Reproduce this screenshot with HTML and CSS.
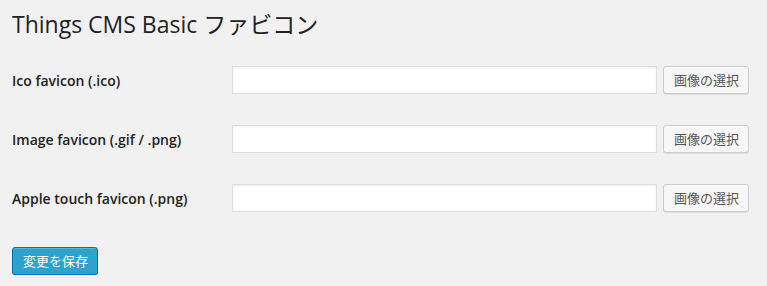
FILE: index.html
```html
<!DOCTYPE html>
<html lang="ja">
<head>
<meta charset="utf-8">
<title>Things CMS Basic ファビコン</title>
<link rel="stylesheet" href="styles.css">
</head>
<body>
<div class="wrap">
  <h2 class="title">Things CMS Basic ファビコン</h2>
  <form class="form">
    <div class="row">
      <label class="label">Ico favicon (.ico)</label>
      <div class="field">
        <input class="text" type="text">
        <button type="button" class="btn">画像の選択</button>
      </div>
    </div>
    <div class="row">
      <label class="label">Image favicon (.gif / .png)</label>
      <div class="field">
        <input class="text" type="text">
        <button type="button" class="btn">画像の選択</button>
      </div>
    </div>
    <div class="row">
      <label class="label">Apple touch favicon (.png)</label>
      <div class="field">
        <input class="text" type="text">
        <button type="button" class="btn">画像の選択</button>
      </div>
    </div>
    <div class="submit">
      <button type="button" class="btn-primary">変更を保存</button>
    </div>
  </form>
</div>
</body>
</html>
```
FILE: styles.css
```css
html, body {
  margin: 0;
  padding: 0;
  background: #f1f1f1;
}
body {
  font-family: "Open Sans", "Noto Sans CJK JP", sans-serif;
  color: #222;
  font-size: 13px;
}
.wrap {
  padding: 0 12px;
}
.title {
  margin: 10px 0 12px;
  font-size: 23px;
  line-height: 29px;
  font-weight: 400;
  color: #222;
}
.form {
  margin: 0;
}
.row {
  display: flex;
  align-items: center;
  padding: 15px 0 16px;
}
.label {
  width: 220px;
  flex: none;
  font-size: 14px;
  font-weight: 600;
  color: #222;
}
.field {
  display: flex;
  align-items: center;
  gap: 6px;
}
.text {
  box-sizing: border-box;
  width: 425px;
  height: 28px;
  margin: 0;
  padding: 3px 5px;
  border: 1px solid #ddd;
  background: #fff;
  box-shadow: inset 0 1px 2px rgba(0,0,0,.07);
  font-family: inherit;
  font-size: 14px;
  outline: none;
}
.btn {
  box-sizing: border-box;
  width: 86px;
  height: 28px;
  margin: 0;
  padding: 0 10px 1px;
  border: 1px solid #ccc;
  border-radius: 3px;
  background: #f7f7f7;
  box-shadow: inset 0 1px 0 #fff, 0 1px 0 rgba(0,0,0,.08);
  color: #555;
  font-family: "Open Sans", "Noto Sans CJK JP", sans-serif;
  font-size: 13px;
  line-height: 26px;
  white-space: nowrap;
}
.submit {
  padding-top: 19px;
}
.btn-primary {
  box-sizing: border-box;
  width: 86px;
  height: 28px;
  margin: 0;
  padding: 0 10px 1px;
  border: 1px solid #0074a2;
  border-radius: 3px;
  background: #2ea2cc;
  box-shadow: inset 0 1px 0 rgba(120,200,230,.5), 0 1px 0 rgba(0,0,0,.15);
  color: #fff;
  font-family: "Open Sans", "Noto Sans CJK JP", sans-serif;
  font-size: 13px;
  line-height: 26px;
  white-space: nowrap;
}
```
